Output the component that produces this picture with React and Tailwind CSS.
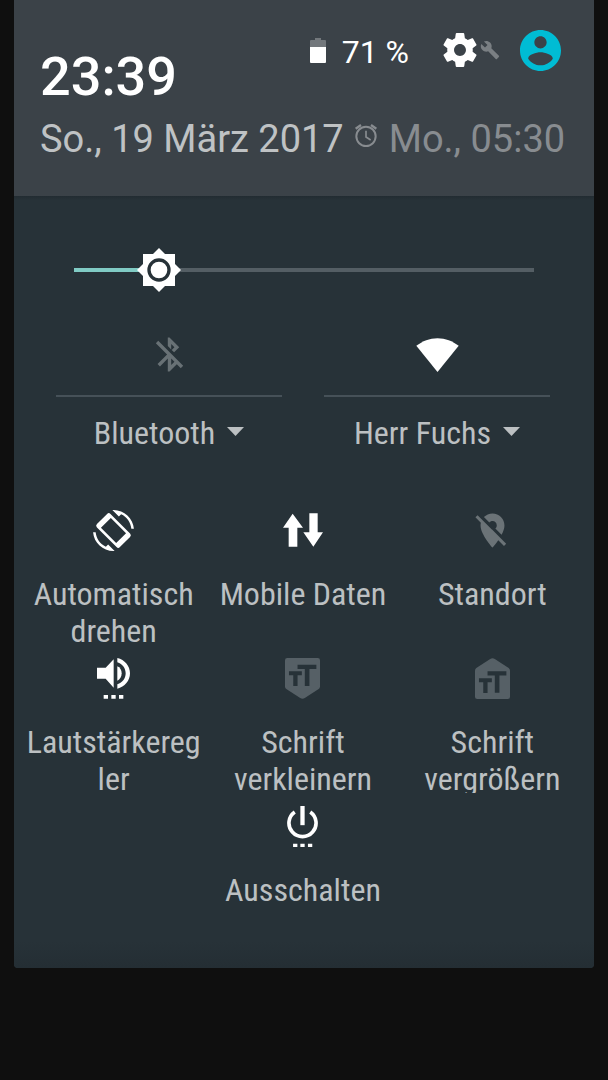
import { useState } from 'react'
import clsx from 'clsx'

function GearIcon() {
  return (
    <svg viewBox="2 2 20 20" className="size-[34px]" fill="currentColor" aria-hidden="true">
      <path d="M19.43 12.98c.04-.32.07-.64.07-.98s-.03-.66-.07-.98l2.11-1.65c.19-.15.24-.42.12-.64l-2-3.46c-.12-.22-.39-.3-.61-.22l-2.49 1c-.52-.4-1.08-.73-1.69-.98l-.38-2.65C14.46 2.18 14.25 2 14 2h-4c-.25 0-.46.18-.49.42l-.38 2.65c-.61.25-1.17.59-1.69.98l-2.49-1c-.23-.09-.49 0-.61.22l-2 3.46c-.13.22-.07.49.12.64l2.11 1.65c-.04.32-.07.65-.07.98s.03.66.07.98l-2.11 1.65c-.19.15-.24.42-.12.64l2 3.46c.12.22.39.3.61.22l2.49-1c.52.4 1.08.73 1.69.98l.38 2.65c.03.24.24.42.49.42h4c.25 0 .46-.18.49-.42l.38-2.65c.61-.25 1.17-.59 1.69-.98l2.49 1c.23.09.49 0 .61-.22l2-3.46c.12-.22.07-.49-.12-.64l-2.11-1.65zM12 15.5c-1.93 0-3.5-1.57-3.5-3.5s1.57-3.5 3.5-3.5 3.5 1.57 3.5 3.5-1.57 3.5-3.5 3.5z" />
    </svg>
  )
}

function WrenchIcon() {
  return (
    <svg viewBox="0 0 24 24" className="size-5 text-[#7a7f83]" fill="currentColor" aria-hidden="true">
      <path d="M22.7 19l-9.1-9.1c.9-2.3.4-5-1.5-6.9-2-2-5-2.4-7.4-1.3L9 6 6 9 1.6 4.7C.4 7.1.9 10.1 2.9 12.1c1.9 1.9 4.6 2.4 6.9 1.5l9.1 9.1c.4.4 1 .4 1.4 0l2.3-2.3c.5-.4.5-1.1.1-1.4z" />
    </svg>
  )
}

function UserIcon() {
  return (
    <svg viewBox="2 2 20 20" className="size-[41px]" fill="currentColor" aria-hidden="true">
      <path d="M12 2C6.48 2 2 6.48 2 12s4.48 10 10 10 10-4.48 10-10S17.52 2 12 2zm0 3c1.66 0 3 1.34 3 3s-1.34 3-3 3-3-1.34-3-3 1.34-3 3-3zm0 14.2c-2.5 0-4.71-1.28-6-3.22.03-1.99 4-3.08 6-3.08 1.99 0 5.97 1.09 6 3.08-1.29 1.94-3.5 3.22-6 3.22z" />
    </svg>
  )
}

function BatteryIcon() {
  return (
    <svg viewBox="0 0 16 25" className="h-[25px] w-4" aria-hidden="true">
      <path d="M5 0h6v2h4q1 0 1 1v6H0V3q0-1 1-1h4z" fill="#73787c" />
      <path d="M0 9h16v15q0 1-1 1H1q-1 0-1-1z" fill="#fff" />
    </svg>
  )
}

function AlarmIcon() {
  return (
    <svg viewBox="0 0 66 69" className="mb-[7px] h-[23px] w-[22px]" fill="none" stroke="currentColor" strokeWidth="6" aria-hidden="true">
      <circle cx="33" cy="37" r="29" />
      <path d="M33 20v19l14 9" strokeWidth="5" />
      <path d="M2 14L18 3M64 14L48 3" strokeWidth="7" />
    </svg>
  )
}

function SunIcon() {
  return (
    <svg viewBox="-66 -66 132 132" className="size-11" aria-hidden="true">
      <path d="M-48-48H48V48H-48z" fill="#fff" />
      <path d="M0-66L66 0 0 66-66 0z" fill="#fff" />
      <circle r="30" fill="#fff" stroke="#273238" strokeWidth="10" />
    </svg>
  )
}

function BluetoothOffIcon() {
  return (
    <svg viewBox="0 0 24 24" className="size-[41px]" fill="currentColor" aria-hidden="true">
      <path d="M13 5.83l1.88 1.88-1.6 1.6 1.41 1.41 3.02-3.02L12 2h-1v5.03l2 2v-3.2zM5.41 4L4 5.41 10.59 12 5 17.59 6.41 19 11 14.41V22h1l4.29-4.29 2.3 2.29L20 18.59 5.41 4zM13 18.17v-3.76l1.88 1.88L13 18.17z" />
    </svg>
  )
}

function WifiIcon() {
  return (
    <svg viewBox="0 0 43 34" className="h-[34px] w-[43px]" fill="currentColor" aria-hidden="true">
      <path d="M21.5 34L.3 7.8C6.5 3 13.5.2 21.5.2s15 2.8 21.2 7.6z" />
    </svg>
  )
}

function RotateIcon() {
  return (
    <svg viewBox="0 0 24 24" className="size-[41px]" fill="currentColor" aria-hidden="true">
      <path d="M16.48 2.52c3.27 1.55 5.61 4.72 5.97 8.48h1.5C23.44 4.84 18.29 0 12 0l-.66.03 3.81 3.81zM7.52 21.48C4.25 19.94 1.91 16.76 1.55 13H.05C.56 19.16 5.71 24 12 24l.66-.03-3.81-3.81z" />
      <path
        transform="rotate(45 12 12)"
        fillRule="evenodd"
        d="M3.9 6.4H20.1a1.4 1.4 0 0 1 1.4 1.4V16.2a1.4 1.4 0 0 1-1.4 1.4H3.9a1.4 1.4 0 0 1-1.4-1.4V7.8a1.4 1.4 0 0 1 1.4-1.4zM5.7 7.9V16.1H18.3V7.9z"
      />
    </svg>
  )
}

function MobileDataIcon() {
  return (
    <svg viewBox="0 0 120 100" className="h-[34px] w-10" fill="currentColor" aria-hidden="true">
      <path d="M29 1L60 43H43V100H17V43H0zM79 0H104V57H120L91 100 61 57H79z" />
    </svg>
  )
}

function LocationOffIcon() {
  return (
    <svg viewBox="0 0 24 24" className="size-[41px]" fill="currentColor" aria-hidden="true">
      <path d="M12 6.5c1.38 0 2.5 1.12 2.5 2.5 0 .74-.33 1.39-.83 1.85l3.63 3.63c.98-1.86 1.7-3.8 1.7-5.48 0-3.87-3.13-7-7-7-1.98 0-3.76.83-5.04 2.15l3.19 3.19c.46-.52 1.11-.84 1.85-.84zm4.37 9.6l-4.63-4.63-.11-.11L3.27 3 2 4.27l3.18 3.18C5.07 7.95 5 8.47 5 9c0 5.25 7 13 7 13s1.67-1.85 3.38-4.35L18.73 21 20 19.73l-3.63-3.63z" />
    </svg>
  )
}

function VolumeIcon() {
  return (
    <svg viewBox="0 0 99 123" className="h-[41px] w-[33px]" fill="currentColor" aria-hidden="true">
      <path d="M0 29H26L50 4V89L26 62H0z" />
      <path d="M61 25C69 28 74 36 74 46S69 65 61 68z" />
      <path d="M61 0C83 5 99 24 99 46S83 87 61 92V79C77 74 86 61 86 46S77 18 61 13z" />
      <path d="M20 111h13v11H20zM43 111h13v11H43zM66 111h13v11H66z" />
    </svg>
  )
}

function FontSmallerIcon() {
  return (
    <svg viewBox="0 0 106 124" className="h-[41px] w-[35px]" aria-hidden="true">
      <path d="M7 0H99q7 0 7 7V86q0 5-4 8L60 121q-7 4-14 0L4 94q-4-3-4-8V7Q0 0 7 0z" fill="currentColor" />
      <path d="M12 40h39v12H38v33H25V52H12zM38 20h57v13H74v52H60V33H38z" fill="#273238" />
    </svg>
  )
}

function FontLargerIcon() {
  return (
    <svg viewBox="0 0 106 124" className="h-[41px] w-[35px]" aria-hidden="true">
      <path d="M7 124H99q7 0 7-7V38q0-5-4-8L60 3q-7-4-14 0L4 30q-4 3-4 8v79q0 7 7 7z" fill="currentColor" />
      <path d="M12 61h39v12H38v33H25V73H12zM38 40h57v13H74v52H60V53H38z" fill="#273238" />
    </svg>
  )
}

function PowerIcon() {
  return (
    <svg viewBox="0 0 93 124" className="h-[41px] w-[31px]" fill="currentColor" aria-hidden="true">
      <path d="M40 0h13v58H40z" />
      <path d="M23 18A41 41 0 1 0 70 18" fill="none" stroke="currentColor" strokeWidth="11" />
      <path d="M18 114h13v10H18zM40 114h13v10H40zM63 114h13v10H63z" />
    </svg>
  )
}

const CONNECTIONS = [
  { label: 'Bluetooth', Icon: BluetoothOffIcon, active: false },
  { label: 'Herr Fuchs', Icon: WifiIcon, active: true },
]

const TILES = [
  { label: 'Automatisch drehen', Icon: RotateIcon, color: 'text-white' },
  { label: 'Mobile Daten', Icon: MobileDataIcon, color: 'text-white' },
  { label: 'Standort', Icon: LocationOffIcon, color: 'text-[#6b7377]' },
  { label: 'Lautstärkeregler', Icon: VolumeIcon, color: 'text-white' },
  { label: 'Schrift verkleinern', Icon: FontSmallerIcon, color: 'text-[#566066]' },
  { label: 'Schrift vergrößern', Icon: FontLargerIcon, color: 'text-[#566066]' },
  { label: 'Ausschalten', Icon: PowerIcon, color: 'text-white' },
]

function Header() {
  return (
    <header className="bg-[#3b4248] pt-6 pr-[30px] pb-[35px] pl-[26px]">
      <div className="flex items-start justify-between">
        <time className="pt-[21px] text-[54px] leading-[64px] font-medium text-white">23:39</time>
        <div className="flex h-[52px] items-center pr-[3px]">
          <BatteryIcon />
          <span className="ml-4 pt-1 text-[32px] leading-10 text-white">71 %</span>
          <button type="button" aria-label="Einstellungen" className="ml-[34px] flex items-center gap-[3px] text-white">
            <GearIcon />
            <WrenchIcon />
          </button>
          <button type="button" aria-label="Nutzer" className="ml-5 text-[#00bcd4]">
            <UserIcon />
          </button>
        </div>
      </div>
      <div className="mt-2 flex items-center text-[38px] leading-[44px] whitespace-nowrap text-[#bfc2c4]">
        <span>So., 19 März 2017</span>
        <button type="button" className="ml-[11px] flex items-center gap-3 text-[#888c90]">
          <AlarmIcon />
          Mo., 05:30
        </button>
      </div>
    </header>
  )
}

function BrightnessSlider() {
  const [value, setValue] = useState(47)
  const percent = `${(value / 255) * 100}%`

  return (
    <div className="relative mx-[60px] flex h-11 items-center">
      <div className="h-1 w-full bg-[#545e64]">
        <div className="h-full bg-[#80cbc4]" style={{ width: percent }} />
      </div>
      <div className="absolute top-0 -translate-x-1/2" style={{ left: percent }}>
        <SunIcon />
      </div>
      <input
        type="range"
        min="0"
        max="255"
        value={value}
        onChange={(e) => setValue(Number(e.target.value))}
        aria-label="Helligkeit"
        className="absolute inset-0 w-full cursor-pointer opacity-0"
      />
    </div>
  )
}

function ConnectionTile({ label, Icon, active }) {
  return (
    <div className="flex flex-1 flex-col px-[21px]">
      <button
        type="button"
        aria-label={`${label} umschalten`}
        className={clsx(
          'flex h-[63px] items-center justify-center border-b-2 border-[#465158] pb-5',
          active ? 'text-white' : 'text-[#687175]'
        )}
      >
        <Icon />
      </button>
      <button type="button" className="mt-[18px] flex items-center justify-center gap-3 whitespace-nowrap">
        {label}
        <svg viewBox="0 0 17 9" className="mb-1 h-[9px] w-[17px]" fill="currentColor" aria-hidden="true">
          <path d="M0 0h17L8.5 9z" />
        </svg>
      </button>
    </div>
  )
}

function Tile({ label, Icon, color }) {
  return (
    <button type="button" className="flex h-[148px] w-1/3 flex-col items-center overflow-hidden px-1.5">
      <span className={clsx('mt-3 flex h-[42px] shrink-0 items-center', color)}>
        <Icon />
      </span>
      <span className="mt-[25px] w-full text-center wrap-break-word">{label}</span>
    </button>
  )
}

export default function App() {
  return (
    <div className="min-h-screen bg-[#0f0f0f] px-[14px] font-['Roboto',sans-serif]">
      <main className="overflow-hidden rounded-b-sm bg-[#273238]">
        <Header />
        <div className="h-1 bg-linear-to-b from-[#222c32] to-[#273238]" />
        <div className="pt-12">
          <BrightnessSlider />
        </div>
        <div className="font-['Roboto_Condensed','Roboto',sans-serif] text-[32px] leading-[37px] text-[#bcc0c2]">
          <div className="mt-[42px] flex pr-[23px] pl-[21px]">
            {CONNECTIONS.map((item) => (
              <ConnectionTile key={item.label} {...item} />
            ))}
          </div>
          <div className="mt-[45px] flex flex-wrap justify-center pr-[7px] pl-[5px]">
            {TILES.map((tile) => (
              <Tile key={tile.label} {...tile} />
            ))}
          </div>
        </div>
        <div className="h-[27px] bg-linear-to-b from-[#273238] to-[#242e34]" />
      </main>
    </div>
  )
}
